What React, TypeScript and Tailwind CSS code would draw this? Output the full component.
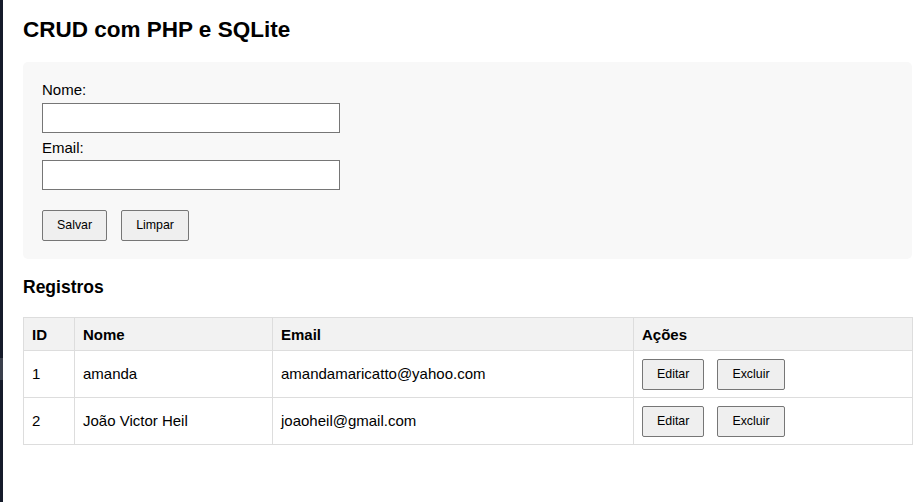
type Registro = {
  id: number;
  nome: string;
  email: string;
};

const registros: Registro[] = [
  { id: 1, nome: "amanda", email: "amandamaricatto@yahoo.com" },
  { id: 2, nome: "João Victor Heil", email: "joaoheil@gmail.com" },
];

function Botao({ children }: { children: string }) {
  return (
    <button
      type="button"
      className="h-[31px] rounded-[2px] border border-[#767676] bg-[#efefef] px-[14px] text-[12.4px] leading-none text-black"
    >
      {children}
    </button>
  );
}

function Campo({ label, first }: { label: string; first?: boolean }) {
  return (
    <div className={first ? "" : "mt-[6px]"}>
      <label className="block leading-[17px]">{label}</label>
      <input
        type="text"
        className={`${first ? "mt-[5px]" : "mt-[4px]"} block h-[30px] w-[298px] border border-[#767676] bg-white px-1 outline-none`}
      />
    </div>
  );
}

export default function App() {
  return (
    <div
      className="flex min-h-[502px] bg-white text-[15px] text-black"
      style={{ fontFamily: '"Liberation Sans", Arial, sans-serif' }}
    >
      <div className="w-[3px] shrink-0 bg-[#151b2a] pt-[358px]">
        <div className="h-[22px] bg-[#3a3f4c]" />
      </div>

      <div className="w-[889px] pl-[20px]">
        <h1 className="mt-[17px] text-[22.5px] leading-[26px] font-bold">
          CRUD com PHP e SQLite
        </h1>

        <div className="mt-[19px] w-[889px] rounded-[5px] bg-[#f8f8f8] px-[19px] pt-[19px] pb-[18px]">
          <Campo label="Nome:" first />
          <Campo label="Email:" />
          <div className="mt-[20px] flex gap-[14px]">
            <Botao>Salvar</Botao>
            <Botao>Limpar</Botao>
          </div>
        </div>

        <h3 className="mt-[18px] text-[17.5px] leading-[20px] font-bold">
          Registros
        </h3>

        <table className="mt-[20px] w-[889px] table-fixed border-collapse">
          <colgroup>
            <col className="w-[51px]" />
            <col className="w-[198px]" />
            <col className="w-[361px]" />
            <col className="w-[279px]" />
          </colgroup>
          <thead>
            <tr className="bg-[#f2f2f2]">
              {["ID", "Nome", "Email", "Ações"].map((h) => (
                <th
                  key={h}
                  className="h-[33px] border border-[#dddddd] px-[8px] text-left leading-[17px] font-bold"
                >
                  {h}
                </th>
              ))}
            </tr>
          </thead>
          <tbody>
            {registros.map((r) => (
              <tr key={r.id}>
                <td className="h-[47px] border border-[#dddddd] px-[8px]">
                  {r.id}
                </td>
                <td className="border border-[#dddddd] px-[8px]">{r.nome}</td>
                <td className="border border-[#dddddd] px-[8px]">{r.email}</td>
                <td className="border border-[#dddddd] px-[8px]">
                  <div className="flex gap-[13px]">
                    <Botao>Editar</Botao>
                    <Botao>Excluir</Botao>
                  </div>
                </td>
              </tr>
            ))}
          </tbody>
        </table>
      </div>
    </div>
  );
}
